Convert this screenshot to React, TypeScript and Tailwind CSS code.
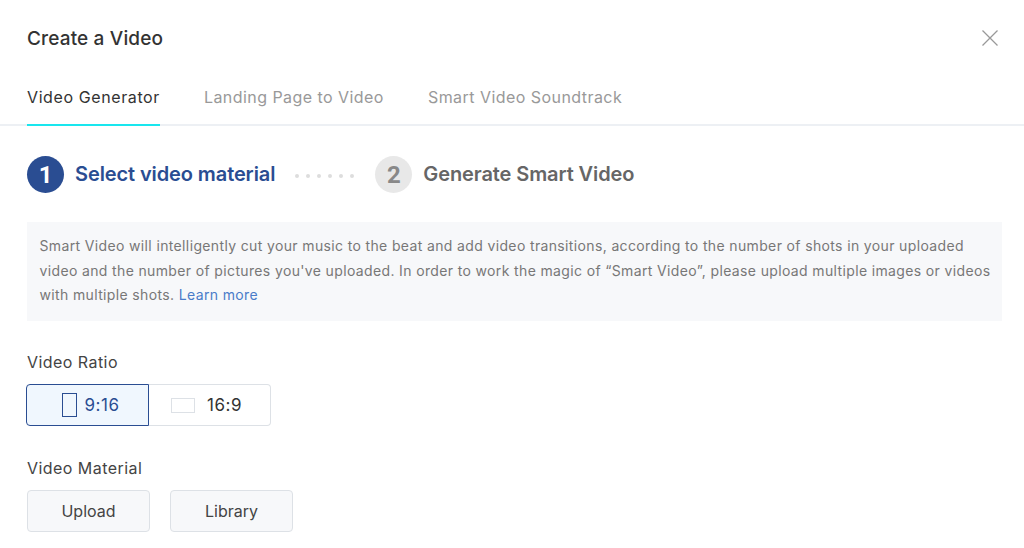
const font = "font-['Inter',sans-serif]";

export default function App() {
  return (
    <div className={`w-[1024px] h-[548px] overflow-hidden bg-white ${font}`}>
      <div className="flex items-center justify-between h-[76px] pl-[27px] pr-[26px]">
        <h1 className="text-[19px] tracking-[0.15px] font-medium text-[#333] leading-none">Create a Video</h1>
        <button className="w-[16px] h-[16px] text-[#999]">
          <svg viewBox="0 0 16 16" className="w-[16px] h-[16px]" fill="none" stroke="currentColor" strokeWidth="1.3">
            <path d="M0.5 0.5l15 15M15.5 0.5l-15 15" />
          </svg>
        </button>
      </div>
      <div className="flex gap-[44px] h-[50px] px-[27px] border-b-2 border-[#edf0f4] text-[16px] tracking-[0.45px]">
        <div className="h-[50px] pt-[9px] border-b-2 border-[#19e6ee] text-[#333] tracking-[0.6px]">Video Generator</div>
        <div className="pt-[9px] text-[#999]">Landing Page to Video</div>
        <div className="pt-[9px] text-[#999]">Smart Video Soundtrack</div>
      </div>
      <div className="flex items-center h-[37px] mt-[30px] px-[27px] text-[20px] tracking-[-0.1px] font-semibold">
        <span className="flex items-center justify-center w-[37px] h-[37px] rounded-full bg-[#2a4d92] text-white text-[24px] font-['Roboto',sans-serif] font-bold">1</span>
        <span className="ml-[11px] pb-[1px] text-[#2a4d92]">Select video material</span>
        <div className="flex gap-[7px] ml-[20px] mr-[21px] mt-[3px]">
          {[0, 1, 2, 3, 4, 5].map((i) => (
            <span key={i} className="w-[4px] h-[4px] rounded-full bg-[#ddd]" />
          ))}
        </div>
        <span className="flex items-center justify-center w-[37px] h-[37px] rounded-full bg-[#e8e8e8] text-[#888] text-[24px] font-['Roboto',sans-serif] font-bold">2</span>
        <span className="ml-[11px] pb-[1px] text-[#666]">Generate Smart Video</span>
      </div>
      <div className="ml-[27px] mt-[29px] w-[975px] h-[99px] pl-[12.5px] pr-[8px] py-[12px] bg-[#f7f8fa] text-[14px] leading-[24.5px] tracking-[0.36px] text-[#777]">
        Smart Video will intelligently cut your music to the beat and add video transitions, according to the number of shots in your uploaded
        video and the number of pictures you've uploaded. In order to work the magic of “Smart Video”, please upload multiple images or videos
        with multiple shots. <a className="text-[#4a7cc9]">Learn more</a>
      </div>
      <div className="mx-[27px] mt-[31px] text-[16px] leading-[20px] tracking-[0.45px] text-[#444]">Video Ratio</div>
      <div className="flex ml-[26px] mt-[12px] w-[245px] h-[42px] text-[17px] tracking-[0.5px]">
        <div className="flex items-center justify-center gap-[8px] w-[123px] pl-[6px] rounded-l-[4px] border border-[#2a4d92] bg-[#f0f7fe] text-[#2a4d92]">
          <span className="w-[15px] h-[24px] border border-[#2a4d92]" />
          <span className="pt-[1px]">9:16</span>
        </div>
        <div className="flex items-center justify-center gap-[12px] flex-1 pr-[6px] rounded-r-[4px] border border-l-0 border-[#dde1e6] text-[#333]">
          <span className="w-[24px] h-[15px] border border-[#dde1e6]" />
          <span className="pt-[1px]">16:9</span>
        </div>
      </div>
      <div className="mx-[27px] mt-[32px] text-[16px] leading-[20px] tracking-[0.45px] text-[#444]">Video Material</div>
      <div className="flex gap-[20px] ml-[27px] mt-[12px] text-[16px] text-[#444]">
        <button className="w-[123px] h-[42px] rounded-[4px] border border-[#dde1e6] bg-[#f7f8fa]">Upload</button>
        <button className="w-[123px] h-[42px] rounded-[4px] border border-[#dde1e6] bg-[#f7f8fa]">Library</button>
      </div>
    </div>
  );
}
